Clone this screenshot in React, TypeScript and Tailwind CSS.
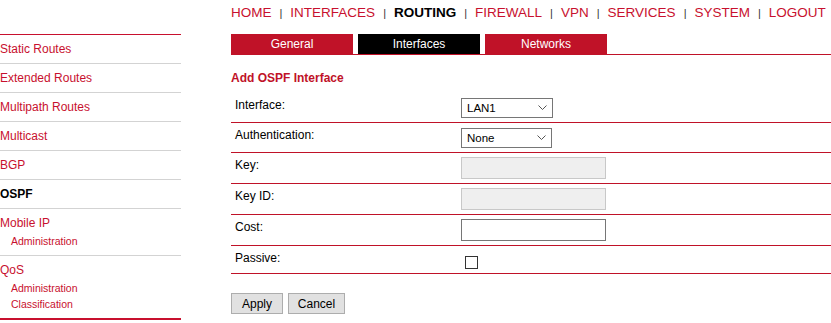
import React from "react";

const RED = "text-[#c8102e]";

function SideItem({ label, active, subs }: { label: string; active?: boolean; subs?: string[] }) {
  return (
    <div className="border-b border-[#d3d3d3] pt-[7px] pb-[6px]">
      <div className={`text-[12px] leading-[15px] ${active ? "font-bold text-black" : RED}`}>{label}</div>
      {subs && (
        <div className="pt-[2px]">
          {subs.map((s) => (
            <div key={s} className={`pl-[11px] text-[10.5px] leading-[16px] ${RED}`}>{s}</div>
          ))}
        </div>
      )}
    </div>
  );
}

function Row({ label, children, h }: { label: string; children: React.ReactNode; h: string }) {
  return (
    <div className={`flex border-b border-[#c01228] ${h}`}>
      <div className="w-[230px] pl-[4px] pt-[5px] text-[12px] leading-[14px] text-black">{label}</div>
      <div className="flex items-center">{children}</div>
    </div>
  );
}

function Select({ value, w }: { value: string; w: string }) {
  return (
    <div className={`flex h-[20px] ${w} items-center justify-between border border-[#767676] bg-white pl-[5px] pr-[5px]`}>
      <span className="pt-[1px] text-[11.5px] leading-[15px] text-black">{value}</span>
      <svg width="9" height="5" viewBox="0 0 9 5">
        <path d="M0.5 0.5l4 4 4-4" fill="none" stroke="#555" strokeWidth="1" />
      </svg>
    </div>
  );
}

export default function App() {
  const nav = ["HOME", "INTERFACES", "ROUTING", "FIREWALL", "VPN", "SERVICES", "SYSTEM", "LOGOUT"];
  return (
    <div className="flex h-[323px] w-[831px] bg-white" style={{ fontFamily: '"Liberation Sans", Arial, sans-serif' }}>
      <div className="w-[181px] shrink-0 pt-[34px]">
        <div className="border-t border-[#c8102e]">
          <SideItem label="Static Routes" />
          <SideItem label="Extended Routes" />
          <SideItem label="Multipath Routes" />
          <SideItem label="Multicast" />
          <SideItem label="BGP" />
          <SideItem label="OSPF" active />
          <SideItem label="Mobile IP" subs={["Administration"]} />
          <div className="border-b-2 border-[#c8102e] pt-[7px] pb-[6px]">
            <div className={`text-[12px] leading-[15px] ${RED}`}>QoS</div>
            <div className="pt-[2px]">
              {["Administration", "Classification"].map((s) => (
                <div key={s} className={`pl-[11px] text-[10.5px] leading-[16px] ${RED}`}>{s}</div>
              ))}
            </div>
          </div>
        </div>
      </div>
      <div className="ml-[50px] flex-1">
        <div className="flex h-[25px] items-center text-[13.5px] leading-[18px]">
          {nav.map((n, i) => (
            <React.Fragment key={n}>
              <span className={n === "ROUTING" ? "font-bold text-black" : RED}>{n}</span>
              {i < nav.length - 1 && <span className="mx-[8px] pt-[1px] text-[11px] text-[#333]">|</span>}
            </React.Fragment>
          ))}
        </div>
        <div className="mt-[9px] flex h-[21px] gap-[5px] border-b border-[#c01228]">
          <div className="flex h-[20px] w-[122px] items-center justify-center bg-[#c01228] text-[12px] text-white">General</div>
          <div className="flex h-[20px] w-[122px] items-center justify-center bg-black text-[12px] text-white">Interfaces</div>
          <div className="flex h-[20px] w-[122px] items-center justify-center bg-[#c01228] text-[12px] text-white">Networks</div>
        </div>
        <div className="pt-[16px] text-[12px] font-bold leading-[14px] text-[#c01228]">Add OSPF Interface</div>
        <div className="mt-[8px]">
          <Row label="Interface:" h="h-[30px]">
            <Select value="LAN1" w="w-[92px]" />
          </Row>
          <Row label="Authentication:" h="h-[30px]">
            <Select value="None" w="w-[91px]" />
          </Row>
          <Row label="Key:" h="h-[31px]">
            <div className="h-[22px] w-[145px] border border-[#c8c8c8] bg-[#efefef]" />
          </Row>
          <Row label="Key ID:" h="h-[31px]">
            <div className="h-[22px] w-[145px] border border-[#c8c8c8] bg-[#efefef]" />
          </Row>
          <Row label="Cost:" h="h-[31px]">
            <div className="h-[22px] w-[145px] border border-[#767676] bg-white" />
          </Row>
          <Row label="Passive:" h="h-[28px]">
            <div className="ml-[4px] mt-[6px] h-[13px] w-[13px] border border-[#333] bg-white" />
          </Row>
        </div>
        <div className="mt-[19px] flex gap-[5px]">
          <div className="flex h-[21px] w-[52px] items-center justify-center border border-[#adadad] bg-[#e1e1e1] text-[12px] text-black">Apply</div>
          <div className="flex h-[21px] w-[57px] items-center justify-center border border-[#adadad] bg-[#e1e1e1] text-[12px] text-black">Cancel</div>
        </div>
      </div>
    </div>
  );
}
